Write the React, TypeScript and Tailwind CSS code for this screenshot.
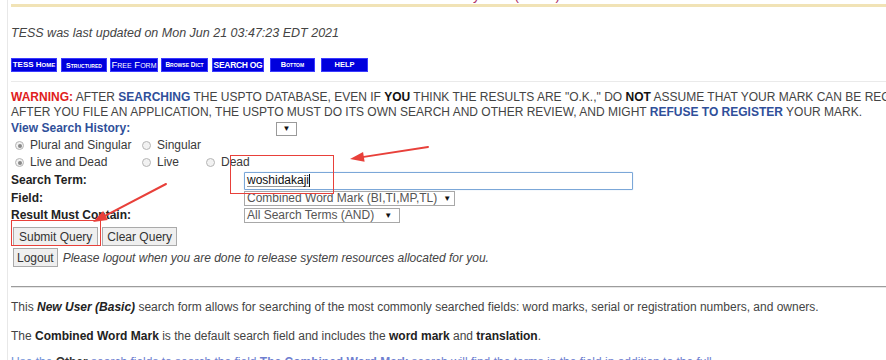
import React from "react";

function Radio({ checked }: { checked?: boolean }) {
  return (
    <span className="inline-flex items-center justify-center w-[9px] h-[9px] rounded-full border border-[#b5b5b5] bg-[#f2f2f2] mr-[6px] align-[-1px]">
      {checked ? <span className="w-[4px] h-[4px] rounded-full bg-[#8a8a8a]" /> : null}
    </span>
  );
}

function Arrow({ x1, y1, x2, y2 }: { x1: number; y1: number; x2: number; y2: number }) {
  const dx = x2 - x1;
  const dy = y2 - y1;
  const len = Math.sqrt(dx * dx + dy * dy);
  const ux = dx / len;
  const uy = dy / len;
  const hl = 14;
  const hw = 5;
  const bx = x2 - ux * hl;
  const by = y2 - uy * hl;
  const p1 = `${bx - uy * hw},${by + ux * hw}`;
  const p2 = `${bx + uy * hw},${by - ux * hw}`;
  return (
    <g>
      <line x1={x1} y1={y1} x2={bx} y2={by} stroke="#e8403a" strokeWidth={2} strokeLinecap="round" />
      <polygon points={`${x2},${y2} ${p1} ${p2}`} fill="#e8403a" />
    </g>
  );
}

const navBtn =
  "h-[14px] bg-[#0000dd] border border-[#3b3bff] text-white font-bold flex items-center justify-center leading-none whitespace-nowrap overflow-hidden";

export default function App() {
  return (
    <div className="relative w-[886px] h-[360px] overflow-hidden bg-white font-['Liberation_Sans',Arial,sans-serif] text-[12px] text-[#3a3a3a]">
      <div className="ml-[7px] h-full border-l border-[#e8e8e8] pl-[3px]">
        {/* clipped header text */}
        <div className="h-[4px] overflow-hidden relative">
          <div className="mt-[-12px] ml-[268px] text-[14px] text-[#b0306a] leading-[14px] whitespace-nowrap">
            Trademark Electronic Search System (TESS)
          </div>
        </div>
        <div className="h-[3px] bg-[#f1e3b6] mr-[-10px]" />

        <div className="mt-[19px] italic text-[12.5px] leading-[15px] text-[#444]">
          TESS was last updated on Mon Jun 21 03:47:23 EDT 2021
        </div>

        <div className="mt-[17px] flex items-center">
          <div className={navBtn + " w-[46px] text-[8px] [font-variant:small-caps]"}>TESS Home</div>
          <div className={navBtn + " w-[46px] ml-[4px] text-[7px] [font-variant:small-caps]"}>Structured</div>
          <div className={navBtn + " w-[48px] ml-[3px] text-[9.5px] font-normal [font-variant:small-caps]"}>Free Form</div>
          <div className={navBtn + " w-[47px] ml-[3px] text-[6.5px] [font-variant:small-caps]"}>Browse Dict</div>
          <div className={navBtn + " w-[52px] ml-[4px] text-[8.5px] tracking-[-0.3px]"}>SEARCH OG</div>
          <div className={navBtn + " w-[45px] ml-[6px] text-[7.5px] [font-variant:small-caps]"}>Bottom</div>
          <div className={navBtn + " w-[47px] ml-[6px] text-[7.5px]"}>HELP</div>
        </div>

        <div className="mt-[9px] h-px bg-[#eaeaea] mr-[-10px]" />

        <div className="mt-[8px] leading-[15px] whitespace-nowrap text-[#444]">
          <div>
            <span className="text-[#e02020] font-bold">WARNING:</span> AFTER{" "}
            <span className="text-[#2f4f9a] font-bold">SEARCHING</span> THE USPTO DATABASE, EVEN IF{" "}
            <span className="font-bold text-[#111]">YOU</span> THINK THE RESULTS ARE "O.K.," DO{" "}
            <span className="font-bold text-[#111]">NOT</span> ASSUME THAT YOUR MARK CAN BE REGISTERED
          </div>
          <div>
            AFTER YOU FILE AN APPLICATION, THE USPTO MUST DO ITS OWN SEARCH AND OTHER REVIEW, AND MIGHT{" "}
            <span className="text-[#2f4f9a] font-bold">REFUSE TO REGISTER</span> YOUR MARK.
          </div>
        </div>

        <div className="grid grid-cols-[233px_1fr] leading-[15px]">
          <div className="h-[17px] flex items-center font-bold text-[#2f4f9a]">View Search History:</div>
          <div className="h-[17px] flex items-center">
            <div className="ml-[32px] w-[21px] h-[14px] border border-[#9a9a9a] bg-white flex items-center justify-center text-[8px] text-[#111]">
              ▼
            </div>
          </div>

          <div className="col-span-2 h-[17px] flex items-center whitespace-nowrap">
            <span className="ml-[4px] w-[127px] inline-flex items-center">
              <Radio checked />
              Plural and Singular
            </span>
            <span className="inline-flex items-center">
              <Radio />
              Singular
            </span>
          </div>
          <div className="col-span-2 h-[17px] flex items-center whitespace-nowrap">
            <span className="ml-[4px] w-[127px] inline-flex items-center">
              <Radio checked />
              Live and Dead
            </span>
            <span className="w-[64px] inline-flex items-center">
              <Radio />
              Live
            </span>
            <span className="inline-flex items-center">
              <Radio />
              Dead
            </span>
          </div>

          <div className="h-[19px] flex items-center font-bold text-[#222]">Search Term:</div>
          <div className="h-[19px] flex items-center">
            <div className="w-[389px] h-[18px] border border-[#7ba7d8] rounded-[1px] bg-white flex items-center px-[2px] shadow-[0_0_1px_#9bc0ea]">
              <span className="text-[#111] underline decoration-[#999] underline-offset-2">woshidakaji</span>
              <span className="w-px h-[13px] bg-[#111]" />
            </div>
          </div>

          <div className="h-[17px] flex items-center font-bold text-[#222]">Field:</div>
          <div className="h-[17px] flex items-center">
            <div className="w-[211px] h-[15px] border border-[#a8a8a8] bg-white flex items-center pl-[2px] text-[#555] whitespace-nowrap">
              Combined Word Mark (BI,TI,MP,TL)
              <span className="ml-[6px] text-[8px] text-[#111]">▼</span>
            </div>
          </div>

          <div className="h-[17px] flex items-center font-bold text-[#222]">Result Must Contain:</div>
          <div className="h-[17px] flex items-center">
            <div className="w-[156px] h-[15px] border border-[#a8a8a8] bg-white flex items-center pl-[2px] text-[#555] whitespace-nowrap">
              All Search Terms (AND)
              <span className="ml-[10px] text-[8px] text-[#111]">▼</span>
            </div>
          </div>
        </div>

        <div className="mt-[3px] flex items-center ml-[2px]">
          <button className="h-[19px] px-[5px] border border-[#aaa] bg-[#efefef] text-[12px] text-[#333] leading-none">
            Submit Query
          </button>
          <button className="ml-[4px] h-[19px] px-[4px] border border-[#aaa] bg-[#efefef] text-[12px] text-[#333] leading-none">
            Clear Query
          </button>
        </div>
        <div className="mt-[2px] flex items-center ml-[2px]">
          <button className="h-[19px] px-[3px] border border-[#aaa] bg-[#efefef] text-[12px] text-[#333] leading-none">
            Logout
          </button>
          <span className="ml-[5px] italic text-[#444]">
            Please logout when you are done to release system resources allocated for you.
          </span>
        </div>

        <div className="mt-[19px] h-[2px] border-t border-[#9c9c9c] bg-[#e6e6e6] mr-[-10px]" />

        <div className="mt-[12px] leading-[15px] text-[#444] whitespace-nowrap">
          This <b className="italic text-[#222]">New User (Basic)</b> search form allows for searching of the most commonly searched
          fields: word marks, serial or registration numbers, and owners.
        </div>
        <div className="mt-[14px] leading-[15px] text-[#444] whitespace-nowrap">
          The <b className="text-[#222]">Combined Word Mark</b> is the default search field and includes the{" "}
          <b className="text-[#222]">word mark</b> and <b className="text-[#222]">translation</b>.
        </div>
        <div className="mt-[11px] leading-[15px] text-[#6f7fd0] whitespace-nowrap">
          <span className="text-[#6f8fd8]">Use the </span>
          <b className="text-[#333]">Other</b> search fields to search the field <b>The Combined Word Mark</b> search will find the terms in the field in addition to the full
        </div>
      </div>

      {/* annotation overlay */}
      <div className="absolute left-[230px] top-[155px] w-[104px] h-[39px] border border-[#e8403a] pointer-events-none" />
      <div className="absolute left-[11px] top-[220px] w-[90px] h-[26px] border border-[#e8403a] pointer-events-none" />
      <svg className="absolute left-0 top-0 pointer-events-none" width={886} height={360}>
        <Arrow x1={428} y1={147} x2={350} y2={159} />
        <Arrow x1={166} y1={184} x2={93} y2={222} />
      </svg>
    </div>
  );
}
